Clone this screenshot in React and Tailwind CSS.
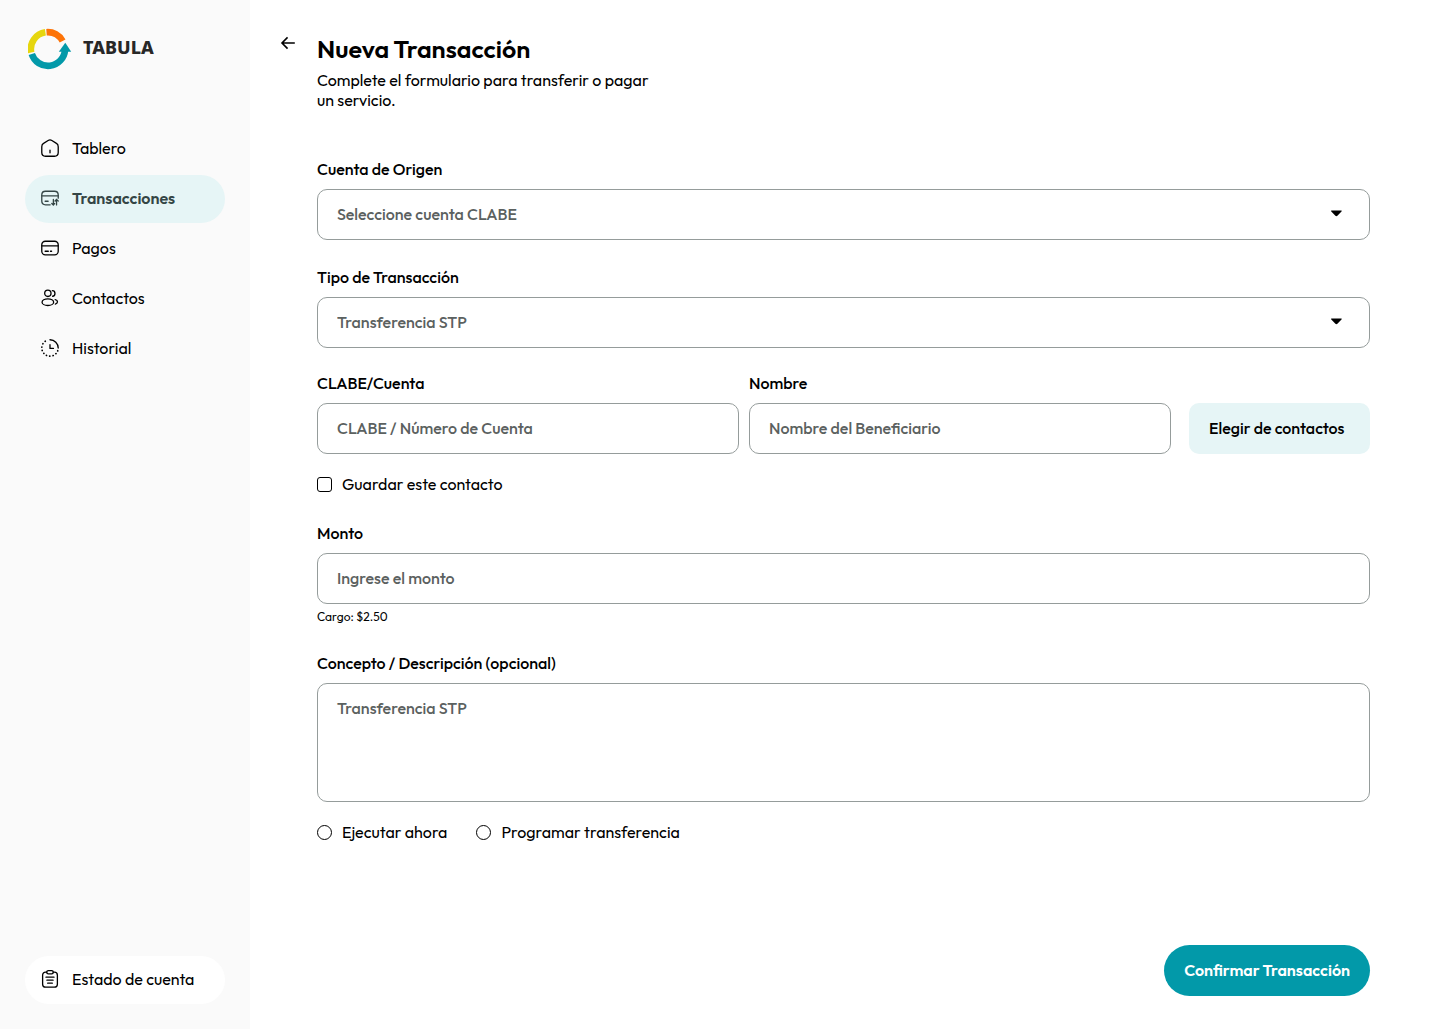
import { useState } from 'react';

const fieldClass =
  'w-full rounded-[10px] border border-[#959c9b] bg-white px-[19px] text-base font-medium text-[#5b6160] placeholder:text-[#5b6160] placeholder:opacity-100';
const labelClass = 'text-base leading-5 font-medium';

function Icon({ children }) {
  return (
    <svg
      viewBox="-0.7 -0.7 21.4 21.4"
      className="size-5 shrink-0"
      fill="none"
      stroke="currentColor"
      strokeWidth="1.4"
      strokeLinecap="round"
      strokeLinejoin="round"
      aria-hidden="true"
    >
      {children}
    </svg>
  );
}

const navItems = [
  {
    label: 'Tablero',
    icon: (
      <Icon>
        <path d="M1.2 8.7c0-1.7.5-2.8 1.9-3.6L8 2c1.3-.8 2.7-.8 4 0l4.9 3.1c1.4.8 1.9 1.9 1.9 3.6v6.1c0 2.7-1.3 4-4 4H5.2c-2.7 0-4-1.3-4-4z" />
        <path d="M10 12.2v2.9" />
      </Icon>
    ),
  },
  {
    label: 'Transacciones',
    active: true,
    icon: (
      <Icon>
        <path d="M10.2 17.3H5.2c-2.7 0-4-1.3-4-4V6.8c0-2.7 1.3-4 4-4h9.600c2.7 0 4 1.3 4 4v3.4" />
        <path d="M1.2 7.7h17.6M4.8 13.5h3.2" />
        <path d="M13.6 11.6v5.8M11.9 15.8l1.7 1.7 1.4-1.7M17 17.4v-5.8M15.4 13.2l1.6-1.7 1.8 1.7" />
      </Icon>
    ),
  },
  {
    label: 'Pagos',
    icon: (
      <Icon>
        <rect x="1.2" y="2.8" width="17.6" height="14.5" rx="3.8" />
        <path d="M1.2 7.7h17.6M4.8 13.5h3.4M10.5 13.5h1.2" />
      </Icon>
    ),
  },
  {
    label: 'Contactos',
    icon: (
      <Icon>
        <circle cx="7.7" cy="5" r="3.4" />
        <ellipse cx="7.7" cy="14.5" rx="6.2" ry="3.5" />
        <path d="M12.5 2.2c1.7 0 2.8 1.2 2.8 2.9s-1.1 2.900-2.5 3M15.5 11.7c1.5.3 2.5 1.2 2.5 2.4s-.9 2-2.3 2.4" />
      </Icon>
    ),
  },
  {
    label: 'Historial',
    icon: (
      <Icon>
        <path d="M10 1.2a8.8 8.8 0 0 1 8.8 8.8" />
        <path d="M18.3 12.9A8.8 8.8 0 1 1 7.5 1.5" strokeDasharray="0.2 3.4" strokeWidth="1.8" />
        <path d="M10 6.5v4h3.7" />
      </Icon>
    ),
  },
];

function Logo() {
  return (
    <svg viewBox="0 0 44 42" className="h-[42px] w-11" aria-hidden="true">
      <g fill="none" strokeWidth="6.6">
        <path d="M3.2 24.5A17 17 0 0 1 17.4 4.3" stroke="#e6d60e" />
        <path d="M18.5 4.2A17 17 0 0 1 34.6 13" stroke="#fd7307" />
        <path d="M3.8 25.9A17 17 0 0 0 37 22" stroke="#0299a9" />
      </g>
      <path d="M37.3 14.8L43.2 23.8H30.8z" fill="#0299a9" />
    </svg>
  );
}

function SelectField({ id, label, option }) {
  return (
    <div className="flex flex-col gap-[10px]">
      <label htmlFor={id} className={labelClass}>{label}</label>
      <div className="relative">
        <select id={id} className={`${fieldClass} h-[51px] appearance-none pb-[2px]`}>
          <option>{option}</option>
        </select>
        <svg
          viewBox="0 0 12 7"
          className="pointer-events-none absolute top-[21px] right-7 h-[7px] w-3"
          aria-hidden="true"
        >
          <path d="M1.7.5h9.4c.6 0 .8.6.4 1L7.4 5.7c-.6.6-1.4.6-2 0L1.3 1.5C.9 1.1 1.1.5 1.7.5z" />
        </svg>
      </div>
    </div>
  );
}

function TextField({ id, label, placeholder }) {
  return (
    <div className="flex min-w-0 flex-1 flex-col gap-[10px]">
      <label htmlFor={id} className={labelClass}>{label}</label>
      <input id={id} type="text" placeholder={placeholder} className={`${fieldClass} h-[51px] pb-[2px]`} />
    </div>
  );
}

function Sidebar() {
  return (
    <aside className="flex w-[250px] shrink-0 flex-col bg-[#fafafa] px-[25px] pt-7 pb-[25px]">
      <a href="#inicio" className="flex items-center gap-[11px] pl-[3px]">
        <Logo />
        <span className="pb-1 font-['Noto_Sans',sans-serif] text-lg leading-5 font-extrabold text-[#272727]">TABULA</span>
      </a>
      <nav className="mt-[55px] flex flex-col gap-[2px]">
        {navItems.map((item) => (
          <a
            key={item.label}
            href={`#${item.label.toLowerCase()}`}
            className={`flex h-12 items-center gap-3 rounded-full px-[15px] pb-[2px] ${
              item.active ? 'bg-[#e6f5f6] font-semibold text-[#344545]' : ''
            }`}
          >
            {item.icon}
            {item.label}
          </a>
        ))}
      </nav>
      <a href="#estado" className="mt-auto flex h-12 items-center gap-3 rounded-full bg-white px-[15px] pb-[2px]">
        <Icon>
          <path d="M6.5 2.7H5.3c-2 0-3.2 1.2-3.2 3.2v9.6c0 2 1.2 3.2 3.2 3.2h9.4c2 0 3.2-1.2 3.2-3.2V5.9c0-2-1.2-3.2-3.2-3.2h-1.2" />
          <rect x="6.5" y="1" width="7" height="3.5" rx="1.7" />
          <path d="M5.7 8h8.6M6.7 11.3h6.6M7.5 14.5h5" />
        </Icon>
        Estado de cuenta
      </a>
    </aside>
  );
}

export default function App() {
  const [timing, setTiming] = useState('');

  return (
    <div className="flex min-h-screen bg-white font-[Outfit,Lato,sans-serif] text-base text-black">
      <Sidebar />
      <main className="flex min-w-0 flex-1 items-start gap-[21px] pt-[35px] pr-[70px] pb-[33px] pl-[30px]">
        <button type="button" aria-label="Volver" className="size-4">
          <svg
            viewBox="0 0 16 16"
            className="size-4"
            fill="none"
            stroke="currentColor"
            strokeWidth="1.6"
            strokeLinecap="square"
          >
            <path d="M14 8H2.5M7 3L2 8l5 5" />
          </svg>
        </button>

        <form className="flex min-w-0 flex-1 flex-col" onSubmit={(e) => e.preventDefault()}>
          <h1 className="text-[25px] leading-7 font-semibold">Nueva Transacción</h1>
          <p className="mt-[7px] max-w-[350px] leading-5">
            Complete el formulario para transferir o pagar un servicio.
          </p>

          <div className="mt-[49px] flex flex-col gap-[27px]">
            <SelectField id="origen" label="Cuenta de Origen" option="Seleccione cuenta CLABE" />
            <SelectField id="tipo" label="Tipo de Transacción" option="Transferencia STP" />
          </div>

          <div className="mt-[25px] flex items-end gap-[18px]">
            <div className="flex min-w-0 flex-1 gap-[10px]">
              <TextField id="clabe" label="CLABE/Cuenta" placeholder="CLABE / Número de Cuenta" />
              <TextField id="nombre" label="Nombre" placeholder="Nombre del Beneficiario" />
            </div>
            <button type="button" className="h-[51px] w-[181px] rounded-[10px] bg-[#e6f5f6] px-5 pb-[2px] text-left font-medium whitespace-nowrap">
              Elegir de contactos
            </button>
          </div>

          <label className="mt-5 flex items-center gap-[10px] self-start leading-5">
            <input type="checkbox" className="size-[15px] appearance-none rounded-[3px] border border-black checked:bg-[#0299a9]" />
            Guardar este contacto
          </label>

          <div className="mt-[29px] flex flex-col">
            <TextField id="monto" label="Monto" placeholder="Ingrese el monto" />
            <p className="mt-[5px] text-xs leading-4">Cargo: $2.50</p>
          </div>

          <div className="mt-7 flex flex-col gap-[10px]">
            <label htmlFor="concepto" className={labelClass}>Concepto / Descripción (opcional)</label>
            <textarea
              id="concepto"
              placeholder="Transferencia STP"
              className={`${fieldClass} h-[119px] resize-none py-3`}
            />
          </div>

          <div className="mt-5 flex gap-[29px] leading-5">
            {['Ejecutar ahora', 'Programar transferencia'].map((option) => (
              <label key={option} className="flex items-center gap-[10px]">
                <input
                  type="radio"
                  name="timing"
                  checked={timing === option}
                  onChange={() => setTiming(option)}
                  className="size-[15px] appearance-none rounded-full border border-black checked:bg-[#0299a9]"
                />
                {option}
              </label>
            ))}
          </div>

          <button
            type="submit"
            className="mt-[103px] h-[51px] self-end rounded-full bg-[#0299a9] px-5 pb-[2px] font-semibold text-white"
          >
            Confirmar Transacción
          </button>
        </form>
      </main>
    </div>
  );
}
